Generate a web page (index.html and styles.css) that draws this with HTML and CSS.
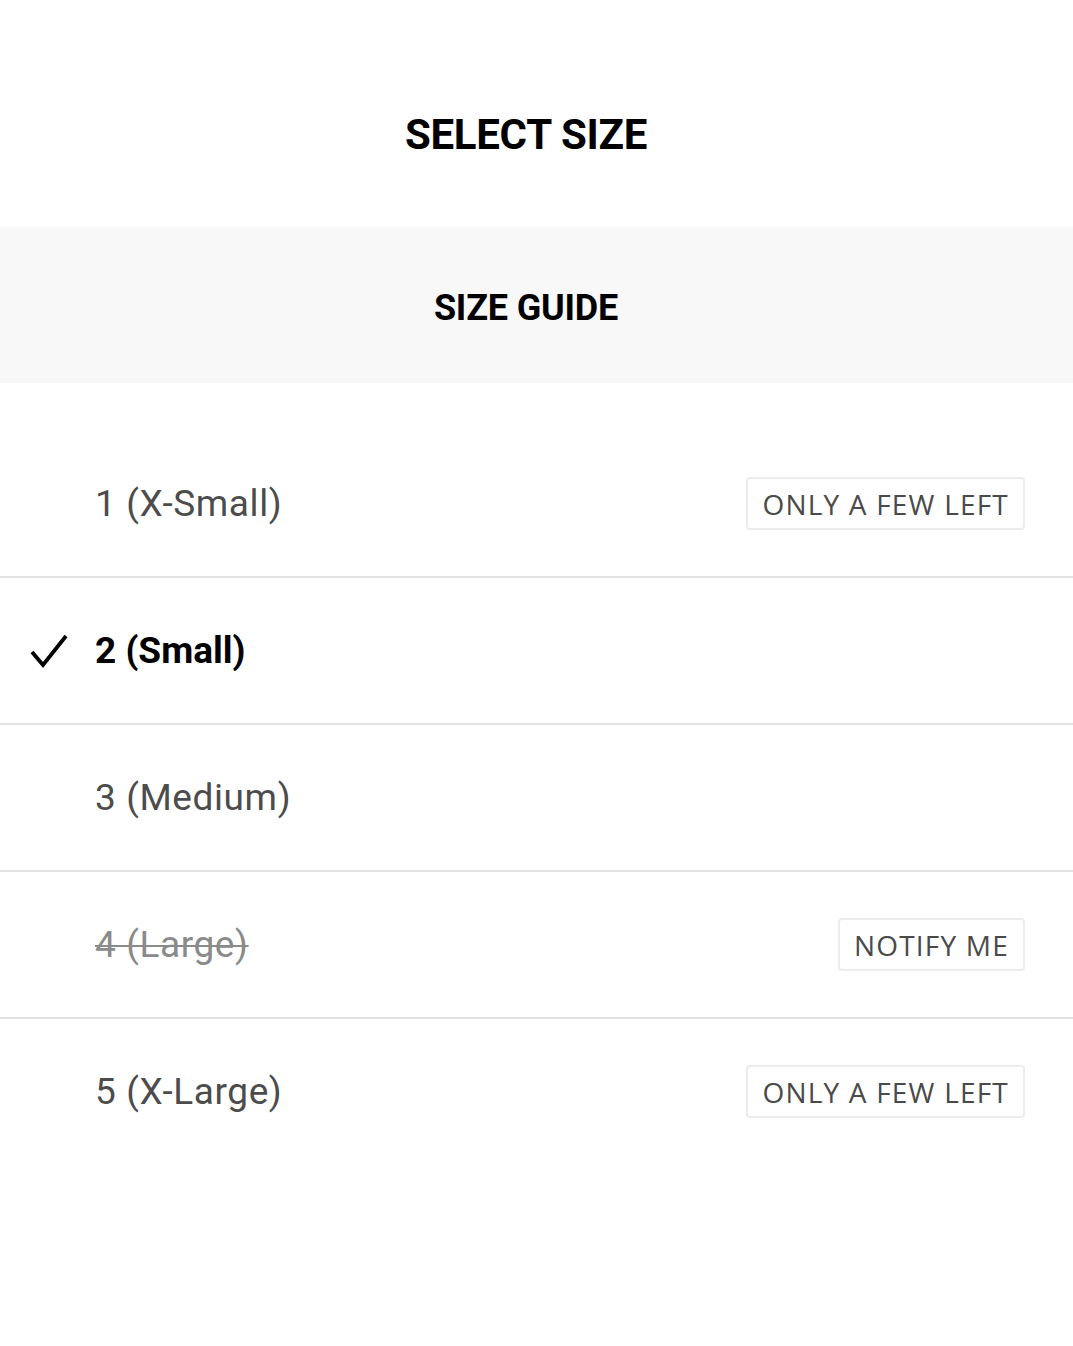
FILE: index.html
```html
<!DOCTYPE html>
<html lang="en">
<head>
  <meta charset="UTF-8">
  <meta name="viewport" content="width=device-width, initial-scale=1.0">
  <title>Select size</title>
  <link rel="stylesheet" href="styles.css">
</head>
<body>
  <div class="sheet">
    <h1 class="title">SELECT SIZE</h1>
    <div class="guide">
      <span>SIZE GUIDE</span>
    </div>
    <ul class="sizes">
      <li class="size">
        <span class="check"></span>
        <span class="label">1 (X-Small)</span>
        <span class="badge">ONLY A FEW LEFT</span>
      </li>
      <li class="size selected">
        <span class="check">
          <svg width="38" height="36" viewBox="0 0 38 36"><path d="M2 19 L13 32 L36 3" fill="none" stroke="#000" stroke-width="3.8"/></svg>
        </span>
        <span class="label">2 (Small)</span>
      </li>
      <li class="size">
        <span class="check"></span>
        <span class="label">3 (Medium)</span>
      </li>
      <li class="size soldout">
        <span class="check"></span>
        <span class="label">4 (Large)</span>
        <span class="badge">NOTIFY ME</span>
      </li>
      <li class="size">
        <span class="check"></span>
        <span class="label">5 (X-Large)</span>
        <span class="badge">ONLY A FEW LEFT</span>
      </li>
    </ul>
  </div>
</body>
</html>
```

FILE: styles.css
```css
body {
  margin: 0;
  background: #fff;
  font-family: Roboto, 'Liberation Sans', sans-serif;
  color: #000;
}

.sheet {
  display: flex;
  flex-direction: column;
}

.title {
  margin: 0;
  height: 227px;
  display: flex;
  align-items: center;
  justify-content: center;
  font-size: 42px;
  font-weight: 700;
  letter-spacing: -0.3px;
  padding: 42px 21px 0 0;
  box-sizing: border-box;
}

.guide {
  background: #f8f8f8;
  height: 156px;
  display: flex;
  align-items: center;
  justify-content: center;
  font-size: 36px;
  font-weight: 700;
  letter-spacing: -0.2px;
  padding: 6px 21px 0 0;
  box-sizing: border-box;
}

.sizes {
  list-style: none;
  margin: 48px 0 0;
  padding: 0;
}

.size {
  height: 145px;
  display: flex;
  align-items: center;
  border-bottom: 2px solid #e2e2e2;
  padding: 0 48px 0 30px;
}

.size:last-child {
  border-bottom: none;
}

.check {
  width: 65px;
  display: flex;
  align-items: center;
}

.label {
  flex: 1;
  font-size: 37px;
  color: #4c4c4c;
  letter-spacing: 0.6px;
}

.selected .label {
  color: #000;
  font-weight: 700;
  letter-spacing: 0;
}

.soldout .label {
  color: #8a8a8a;
  text-decoration: line-through;
  text-decoration-thickness: 2px;
}

.badge {
  border: 2px solid #ececec;
  border-radius: 4px;
  padding: 0 14px;
  height: 53px;
  box-sizing: border-box;
  display: flex;
  align-items: center;
  font-family: 'Open Sans', sans-serif;
  font-size: 28px;
  letter-spacing: 1.2px;
  color: #4a4a4a;
}
```
